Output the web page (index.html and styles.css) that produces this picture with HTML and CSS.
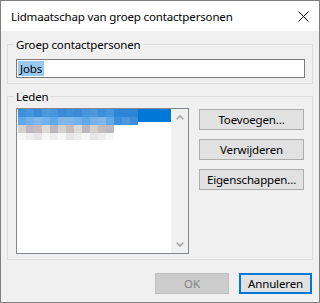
FILE: index.html
```html
<!DOCTYPE html>
<html lang="nl">
<head>
<meta charset="utf-8">
<title>Lidmaatschap van groep contactpersonen</title>
<link rel="stylesheet" href="styles.css">
</head>
<body>
<div class="window">
  <div class="titlebar">
    <span class="title">Lidmaatschap van groep contactpersonen</span>
    <svg class="close" width="11" height="11" viewBox="0 0 11 11"><path d="M0.5 0.5 L10.5 10.5 M10.5 0.5 L0.5 10.5" stroke="#000" stroke-width="1" fill="none"/></svg>
  </div>
  <div class="body">
    <fieldset class="group group-name">
      <legend>Groep contactpersonen</legend>
      <div class="textbox"><span class="sel">Jobs</span></div>
    </fieldset>
    <fieldset class="group group-members">
      <legend>Leden</legend>
      <div class="members-row">
        <div class="listbox">
          <div class="list-items">
            <div class="sel-row"></div>
            <div class="mosaic">
              <div class="mrow r1">
                <i class="b1"></i><i class="b2"></i><i class="b3"></i><i class="b4"></i><i class="b2"></i><i class="b3"></i><i class="b1"></i><i class="b3"></i><i class="b2"></i><i class="b4"></i><i class="b1"></i><i class="b2"></i><i class="b5"></i><i class="b5"></i><i class="b5"></i>
              </div>
              <div class="mrow r2">
                <i class="l1"></i><i class="l2"></i><i class="l3"></i><i class="l2"></i><i class="l1"></i><i class="l3"></i><i class="l3"></i><i class="l2"></i><i class="l1"></i><i class="l2"></i><i class="l3"></i><i class="l1"></i><i class="b1"></i><i class="b4"></i><i class="b1"></i>
              </div>
              <div class="mrow r3">
                <i class="g1"></i><i class="g2"></i><i class="g3"></i><i class="g4"></i><i class="g2"></i><i class="g1"></i><i class="g3"></i><i class="g4"></i><i class="g2"></i><i class="g1"></i><i class="g3"></i><i class="g2"></i>
              </div>
              <div class="mrow r4">
                <i class="w1"></i><i class="w2"></i><i class="w3"></i><i class="w1"></i><i class="w2"></i><i class="w1"></i><i class="w3"></i><i class="w2"></i><i class="w1"></i><i class="w3"></i><i class="w2"></i><i class="w1"></i>
              </div>
            </div>
          </div>
          <div class="scrollbar">
            <div class="sb-btn"><svg width="8" height="5" viewBox="0 0 8 5"><polyline points="0.7,4.3 4,1 7.3,4.3" fill="none" stroke="#a3a3a3" stroke-width="1.6"/></svg></div>
            <div class="sb-btn"><svg width="8" height="5" viewBox="0 0 8 5"><polyline points="0.7,0.7 4,4 7.3,0.7" fill="none" stroke="#a3a3a3" stroke-width="1.6"/></svg></div>
          </div>
        </div>
        <div class="side-buttons">
          <button class="btn">Toevoegen...</button>
          <button class="btn">Verwijderen</button>
          <button class="btn">Eigenschappen...</button>
        </div>
      </div>
    </fieldset>
    <div class="footer">
      <button class="btn btn-ok" disabled>OK</button>
      <button class="btn btn-cancel">Annuleren</button>
    </div>
  </div>
</div>
</body>
</html>
```
FILE: styles.css
```css
* { box-sizing: border-box; }
html, body { margin: 0; padding: 0; background: #ffffff; }
body {
  font-family: "Segoe UI", "Noto Sans", "Liberation Sans", sans-serif;
  font-size: 11.5px;
  letter-spacing: -0.15px;
  color: #000;
}
.window {
  width: 320px;
  height: 303px;
  border: 1px solid #7f7f7f;
  display: flex;
  flex-direction: column;
}
.titlebar {
  height: 30px;
  background: #fff;
  display: flex;
  align-items: center;
  justify-content: space-between;
  padding: 0 10px 0 10px;
}
.title { line-height: 16px; padding-top: 1px; }
.close { display: block; }
.body {
  flex: 1;
  background: #f0f0f0;
  padding: 5px 6px 8px 6px;
  display: flex;
  flex-direction: column;
}
.group {
  margin: 0;
  border: 1px solid #dcdcdc;
  min-width: 0;
}
.group legend {
  line-height: 17px;
  padding: 0 2px;
  margin-left: -2px;
}
.group-name { padding: 6px 7px 5px 8px; }
.group-members { padding: 3px 8px 5px 8px; margin-top: 4px; }
.textbox {
  height: 19px;
  border: 1px solid #7a7a7a;
  background: #fff;
  padding: 1px 0 0 1px;
  line-height: 15px;
}
.sel {
  display: inline-block;
  background: #99c9ef;
  padding: 0 2px;
  height: 15px;
}
.members-row { display: flex; gap: 10px; }
.listbox {
  width: 173px;
  height: 146px;
  border: 1px solid #828790;
  background: #fff;
  display: flex;
}
.list-items {
  flex: 1;
  position: relative;
  padding-left: 1px;
}
.sel-row { height: 13px; background: #0078d7; }
.mosaic {
  position: absolute;
  top: 0;
  left: 1px;
}
.mrow { display: flex; height: 8px; }
.mrow.r4 { height: 7px; }
.mrow i { display: block; width: 8px; height: 100%; }
.b1 { background: #3d8fdb; }
.b2 { background: #4596de; }
.b3 { background: #3a8ad8; }
.b4 { background: #4c98de; }
.b5 { background: #2d85d6; }
.l1 { background: #62a7e6; }
.l2 { background: #72b1e9; }
.l3 { background: #7eb7eb; }
.g1 { background: #d4d0ce; }
.g2 { background: #bcb8be; }
.g3 { background: #c6bcbe; }
.g4 { background: #dcdad8; }
.w1 { background: #f6f6f6; }
.w2 { background: #ededed; }
.w3 { background: #e6e4e6; }
.scrollbar {
  width: 17px;
  background: #f0f0f0;
  display: flex;
  flex-direction: column;
  justify-content: space-between;
}
.sb-btn {
  height: 17px;
  display: flex;
  align-items: center;
  justify-content: center;
}
.sb-btn svg { display: block; }
.side-buttons {
  flex: 1;
  display: flex;
  flex-direction: column;
  gap: 9px;
  padding-top: 1px;
}
.btn {
  font-family: inherit;
  font-size: 11.5px;
  letter-spacing: -0.15px;
  color: #000;
  height: 21px;
  background: #e1e1e1;
  border: 1px solid #adadad;
  border-radius: 0;
  padding: 0;
  margin: 0;
  line-height: 17px;
}
.footer {
  display: flex;
  justify-content: flex-end;
  gap: 10px;
  margin-top: 13px;
  padding-right: 1px;
}
.btn-ok {
  width: 74px;
  background: #cccccc;
  border-color: #bfbfbf;
  color: #838383;
}
.btn-cancel {
  width: 73px;
  border: 2px solid #0078d7;
}
```
